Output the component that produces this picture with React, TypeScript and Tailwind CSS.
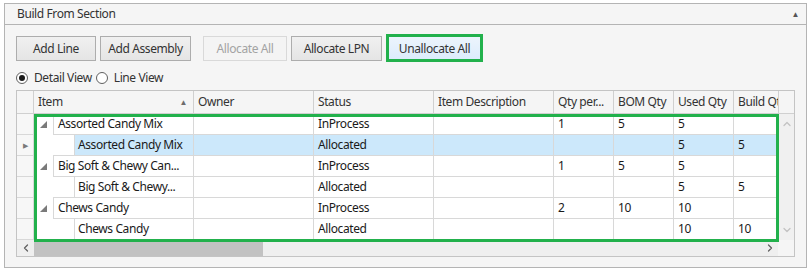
import { ChevronUp, ChevronDown, ChevronLeft, ChevronRight } from "lucide-react";

type Row = {
  level: 0 | 1;
  item: string;
  status: string;
  qtyPer?: string;
  bom?: string;
  used?: string;
  build?: string;
  selected?: boolean;
};

const rows: Row[] = [
  { level: 0, item: "Assorted Candy Mix", status: "InProcess", qtyPer: "1", bom: "5", used: "5" },
  { level: 1, item: "Assorted Candy Mix", status: "Allocated", used: "5", build: "5", selected: true },
  { level: 0, item: "Big Soft & Chewy Can...", status: "InProcess", qtyPer: "1", bom: "5", used: "5" },
  { level: 1, item: "Big Soft & Chewy...", status: "Allocated", used: "5", build: "5" },
  { level: 0, item: "Chews Candy", status: "InProcess", qtyPer: "2", bom: "10", used: "10" },
  { level: 1, item: "Chews Candy", status: "Allocated", used: "10", build: "10" },
];

function Btn({ label, w, disabled, hot }: { label: string; w: string; disabled?: boolean; hot?: boolean }) {
  const base = `${w} relative h-[25px] border text-[12px] leading-none whitespace-nowrap flex items-center justify-center`;
  if (disabled)
    return <div className={`${base} border-[#d9d9d9] bg-[#f4f4f4] text-[#a3a3a3]`}>{label}</div>;
  if (hot)
    return (
      <div className={`${base} border-[#7eb4ea] bg-gradient-to-b from-[#ecf4fc] to-[#dcecfc] text-[#333]`}>
        {label}
        {/* highlight frame */}
        <span className="absolute -left-[3px] -right-[3px] -top-[3px] -bottom-[2px] border-[3px] border-[#22b14c] pointer-events-none" />
      </div>
    );
  return (
    <div className={`${base} border-[#adadad] bg-gradient-to-b from-[#f0f0f0] to-[#e5e5e5] text-[#333]`}>
      {label}
    </div>
  );
}

function Radio({ checked, label }: { checked?: boolean; label: string }) {
  return (
    <div className="flex items-center gap-[6px]">
      <div className="w-[12px] h-[12px] rounded-full border border-[#606060] bg-white flex items-center justify-center">
        {checked && <div className="w-[6px] h-[6px] rounded-full bg-[#1a1a1a]" />}
      </div>
      <span className="text-[12px] text-[#333]">{label}</span>
    </div>
  );
}

const cols = ["w-[120px]", "w-[120px]", "w-[120px]", "w-[60px]", "w-[60px]", "w-[60px]", "w-[45px]"];

function Cell({ w, children }: { w: string; children?: React.ReactNode }) {
  return (
    <div className={`${w} shrink-0 h-full border-r border-b border-[#d8d8d8] pl-[4px] flex items-center whitespace-nowrap overflow-hidden`}>
      {children}
    </div>
  );
}

function DataRow({ r }: { r: Row }) {
  const bg = r.selected ? "bg-[#cce8fb]" : "bg-white";
  return (
    <div className="flex h-[21px] text-[12px] text-[#1a1a1a]">
      <div className="w-[17px] shrink-0 border-r border-b border-[#d8d8d8] bg-[#f7f7f7] flex items-center justify-center">
        {r.selected && <span className="text-[7px] text-[#7a7a7a] leading-none">▶</span>}
      </div>
      <div className="w-[160px] shrink-0 flex h-full">
        {r.level === 0 ? (
          <div className="w-[19px] shrink-0 bg-white flex items-center pl-[6px]">
            <svg width="7" height="7" viewBox="0 0 7 7">
              <path d="M7 0 L7 7 L0 7 Z" fill="#7a7a7a" />
            </svg>
          </div>
        ) : (
          <div className="w-[19px] shrink-0 bg-white" />
        )}
        {r.level === 1 ? (
          <div className="flex-1 flex h-full border-b border-[#d8d8d8]">
            <div className="w-[21px] shrink-0 bg-white" />
            <div className={`flex-1 h-full border-l border-r border-[#d8d8d8] pl-[3px] flex items-center whitespace-nowrap ${bg}`}>
              {r.item}
            </div>
          </div>
        ) : (
          <div className="flex-1 h-full border-l border-r border-b border-[#d8d8d8] pl-[4px] flex items-center whitespace-nowrap bg-white">
            {r.item}
          </div>
        )}
      </div>
      <div className={`flex h-full ${bg}`}>
        <Cell w={cols[0]} />
        <Cell w={cols[1]}>{r.status}</Cell>
        <Cell w={cols[2]} />
        <Cell w={cols[3]}>{r.qtyPer}</Cell>
        <Cell w={cols[4]}>{r.bom}</Cell>
        <Cell w={cols[5]}>{r.used}</Cell>
        <Cell w={cols[6]}>{r.build}</Cell>
      </div>
    </div>
  );
}

function Head({ w, label, sort }: { w: string; label: string; sort?: boolean }) {
  return (
    <div className={`${w} shrink-0 h-full border-r border-b border-[#d0d0d0] pl-[4px] pr-[6px] flex items-center justify-between whitespace-nowrap overflow-hidden`}>
      <span>{label}</span>
      {sort && <span className="text-[8px] text-[#6d6d6d]">▲</span>}
    </div>
  );
}

export default function App() {
  return (
    <div
      className="w-[810px] h-[272px] bg-white pl-[4px] pt-[3px] tracking-[-0.4px]"
      style={{ fontFamily: '"Segoe UI", "Noto Sans", sans-serif' }}
    >
      <div className="w-[803px] h-[265px] border border-[#b4b4b4] bg-[#f5f5f5] flex flex-col">
        {/* Section header */}
        <div className="h-[21px] shrink-0 border-b border-[#b4b4b4] flex items-center justify-between pl-[12px] pr-[7px]">
          <span className="text-[12px] text-[#333]">Build From Section</span>
          <span className="text-[8px] text-[#555]">▲</span>
        </div>

        <div className="pl-[11px] pt-[11px] flex flex-col">
          {/* Toolbar */}
          <div className="flex items-center">
            <Btn label="Add Line" w="w-[80px]" />
            <div className="ml-[4px]"><Btn label="Add Assembly" w="w-[91px]" /></div>
            <div className="ml-[12px]"><Btn label="Allocate All" w="w-[84px]" disabled /></div>
            <div className="ml-[4px]"><Btn label="Allocate LPN" w="w-[91px]" /></div>
            <div className="ml-[6px]"><Btn label="Unallocate All" w="w-[93px]" hot /></div>
          </div>

          {/* View toggle */}
          <div className="flex items-center gap-[4px] mt-[9px] h-[16px]">
            <Radio checked label="Detail View" />
            <Radio label="Line View" />
          </div>

          {/* Grid */}
          <div className="mt-[4px] w-[779px] border border-[#c4c4c4] bg-white flex flex-col">
            <div className="flex h-[23px] bg-[#f5f5f5] text-[12px] text-[#333]">
              <div className="w-[17px] shrink-0 border-r border-b border-[#d0d0d0]" />
              <Head w="w-[160px]" label="Item" sort />
              <Head w={cols[0]} label="Owner" />
              <Head w={cols[1]} label="Status" />
              <Head w={cols[2]} label="Item Description" />
              <Head w={cols[3]} label="Qty per..." />
              <Head w={cols[4]} label="BOM Qty" />
              <Head w={cols[5]} label="Used Qty" />
              <Head w={cols[6]} label="Build Qty" />
              <div className="flex-1 border-b border-[#d0d0d0]" />
            </div>

            <div className="relative flex">
              <div className="flex flex-col">
                {rows.map((r, i) => (
                  <DataRow key={i} r={r} />
                ))}
              </div>
              {/* vertical scrollbar */}
              <div className="w-[16px] bg-[#f0f0f0] flex flex-col items-center justify-between py-[4px]">
                <ChevronUp size={12} strokeWidth={2.5} className="text-[#c2c2c2]" />
                <ChevronDown size={12} strokeWidth={2.5} className="text-[#c2c2c2]" />
              </div>
              {/* highlight frame */}
              <div className="absolute left-[17px] top-0 w-[745px] h-[128px] border-[3px] border-[#22b14c] pointer-events-none" />
            </div>

            {/* horizontal scrollbar */}
            <div className="flex h-[16px]">
              <div className="flex-1 bg-[#efefef] flex items-center">
                <div className="w-[17px] flex justify-center">
                  <ChevronLeft size={12} strokeWidth={2.5} className="text-[#606060]" />
                </div>
                <div className="w-[229px] h-full bg-[#c2c2c2]" />
                <div className="flex-1" />
                <div className="w-[17px] flex justify-center">
                  <ChevronRight size={12} strokeWidth={2.5} className="text-[#606060]" />
                </div>
              </div>
              <div className="w-[16px] bg-[#f5f5f5]" />
            </div>
          </div>
        </div>
      </div>
    </div>
  );
}
